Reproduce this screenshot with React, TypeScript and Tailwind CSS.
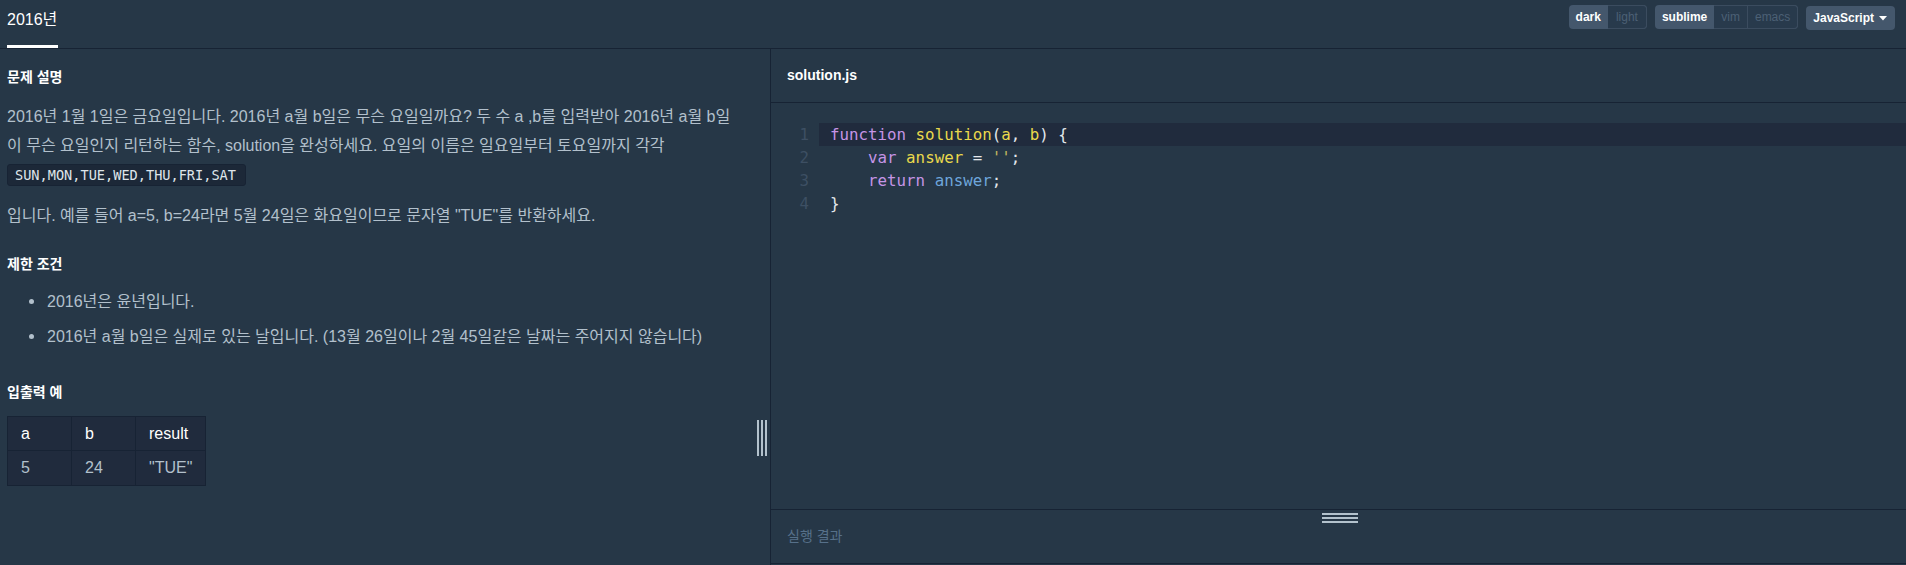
import React from "react";

const ui = { fontFamily: '"Liberation Sans", "Noto Sans CJK KR", sans-serif' };
const mono = { fontFamily: '"DejaVu Sans Mono", "Liberation Mono", monospace' };

function Seg({ items, pads, active }: { items: string[]; pads: string[]; active: number }) {
  return (
    <div className="flex h-[24px] rounded-[4px] overflow-hidden bg-[#44576c]">
      {items.map((t, i) => (
        <div
          key={t}
          className={
            i === active
              ? "flex items-center text-[12px] font-bold text-white " + pads[i]
              : "flex items-center text-[12px] text-[#4c6075] bg-[#283a4c] border-y border-r border-[#3b4c5f] " +
                pads[i] +
                (i === items.length - 1 ? " rounded-r-[4px]" : "")
          }
        >
          {t}
        </div>
      ))}
    </div>
  );
}

const tok = {
  kw: "text-[#c594e6]",
  fn: "text-[#ead94c]",
  pl: "text-[#e3e8ec]",
  bl: "text-[#6ea6dc]",
  st: "text-[#c2b960]",
};

export default function App() {
  return (
    <div className="w-[1906px] h-[565px] bg-[#263747] flex flex-col overflow-hidden" style={ui}>
      {/* header */}
      <div className="h-[49px] border-b border-[#172334] flex justify-between shrink-0">
        <div className="ml-[7px] flex flex-col justify-between">
          <div className="pt-[9px] text-[16px] leading-[22px] text-white">2016년</div>
          <div className="h-[3px] w-[51px] bg-white" />
        </div>
        <div className="flex items-start gap-[8px] pr-[11px] pt-[5px]">
          <Seg items={["dark", "light"]} pads={["px-[7px]", "px-[8px]"]} active={0} />
          <Seg items={["sublime", "vim", "emacs"]} pads={["px-[7px]", "px-[7px]", "px-[7px]"]} active={0} />
          <div className="mt-[1px] h-[24px] rounded-[4px] bg-[#44576c] flex items-center pl-[7px] pr-[8px] gap-[5px] text-[12px] font-bold text-white">
            JavaScript
            <svg width="8" height="5" viewBox="0 0 8 5"><path d="M0 0h8L4 4.5z" fill="#fff" /></svg>
          </div>
        </div>
      </div>

      {/* main */}
      <div className="flex flex-1 relative">
        {/* left */}
        <div className="w-[771px] border-r border-[#172334] pl-[7px] shrink-0 text-[#b2c0cc]">
          <div className="mt-[18px] text-[14px] leading-[20px] font-bold text-white">문제 설명</div>
          <div className="mt-[15px] text-[16px] leading-[29px] whitespace-nowrap">
            <div>2016년 1월 1일은 금요일입니다. 2016년 a월 b일은 무슨 요일일까요? 두 수 a ,b를 입력받아 2016년 a월 b일</div>
            <div>이 무슨 요일인지 리턴하는 함수, solution을 완성하세요. 요일의 이름은 일요일부터 토요일까지 각각</div>
          </div>
          <div className="mt-[4px] w-[239px] h-[22px] rounded-[3px] bg-[#1c2838] border border-[#172334] overflow-hidden flex items-center pl-[7px]">
            <span className="text-[13.6px] text-[#dfe5ea] whitespace-nowrap" style={mono}>
              SUN,MON,TUE,WED,THU,FRI,SAT
            </span>
          </div>
          <div className="mt-[15px] text-[16px] leading-[29px] whitespace-nowrap">
            입니다. 예를 들어 a=5, b=24라면 5월 24일은 화요일이므로 문자열 "TUE"를 반환하세요.
          </div>

          <div className="mt-[24px] text-[14px] leading-[20px] font-bold text-white">제한 조건</div>
          <ul className="mt-[10px] text-[16px] leading-[35px] whitespace-nowrap">
            <li className="flex items-center">
              <span className="w-[40px] pl-[22px] flex items-center"><span className="w-[5px] h-[5px] rounded-full bg-[#b2c0cc]" /></span>
              2016년은 윤년입니다.
            </li>
            <li className="flex items-center">
              <span className="w-[40px] pl-[22px] flex items-center"><span className="w-[5px] h-[5px] rounded-full bg-[#b2c0cc]" /></span>
              2016년 a월 b일은 실제로 있는 날입니다. (13월 26일이나 2월 45일같은 날짜는 주어지지 않습니다)
            </li>
          </ul>

          <div className="mt-[28px] text-[14px] leading-[20px] font-bold text-white">입출력 예</div>
          <table className="mt-[14px] border-collapse bg-[#202b3d] text-[16px]">
            <thead>
              <tr className="h-[34px] text-white">
                <td className="w-[64px] border border-[#172334] pl-[13px]">a</td>
                <td className="w-[64px] border border-[#172334] pl-[13px]">b</td>
                <td className="w-[70px] border border-[#172334] pl-[13px]">result</td>
              </tr>
            </thead>
            <tbody>
              <tr className="h-[35px] text-[#b2c0cc]">
                <td className="border border-[#172334] pl-[13px]">5</td>
                <td className="border border-[#172334] pl-[13px]">24</td>
                <td className="border border-[#172334] pl-[13px]">"TUE"</td>
              </tr>
            </tbody>
          </table>
        </div>

        {/* vertical resizer */}
        <div className="absolute left-[757px] top-[371px] flex gap-[2px]">
          <div className="w-[2px] h-[36px] bg-[#b3c2cd]" />
          <div className="w-[2px] h-[36px] bg-[#b3c2cd]" />
          <div className="w-[2px] h-[36px] bg-[#b3c2cd]" />
        </div>

        {/* right */}
        <div className="flex-1 flex flex-col">
          <div className="h-[54px] border-b border-[#172334] flex items-center pl-[16px] pb-[1px] text-[14px] font-bold text-white shrink-0">
            solution.js
          </div>
          <div className="flex-1 pt-[20px] text-[15.8px] leading-[23px]" style={mono}>
            {[
              <><span className={tok.kw}>function</span> <span className={tok.fn}>solution</span><span className={tok.pl}>(</span><span className={tok.fn}>a</span><span className={tok.pl}>, </span><span className={tok.fn}>b</span><span className={tok.pl}>) {"{"}</span></>,
              <>{"    "}<span className={tok.kw}>var</span> <span className={tok.fn}>answer</span> <span className={tok.pl}>=</span> <span className={tok.st}>''</span><span className={tok.pl}>;</span></>,
              <>{"    "}<span className={tok.kw}>return</span> <span className={tok.bl}>answer</span><span className={tok.pl}>;</span></>,
              <><span className={tok.pl}>{"}"}</span></>,
            ].map((c, i) => (
              <div key={i} className="flex h-[23px]">
                <div className="w-[38px] text-right text-[#3d4f63] shrink-0">{i + 1}</div>
                <div className={"ml-[10px] flex-1 pl-[11px] whitespace-pre " + (i === 0 ? "bg-[#202b3d]" : "")}>{c}</div>
              </div>
            ))}
          </div>
          <div className="h-[55px] border-t border-b border-[#172334] relative shrink-0 mb-[1px] flex items-center pl-[16px]">
            <div className="absolute left-[551px] top-[3px] flex flex-col gap-[2px]">
              <div className="w-[36px] h-[2px] bg-[#b3c2cd]" />
              <div className="w-[36px] h-[2px] bg-[#b3c2cd]" />
              <div className="w-[36px] h-[2px] bg-[#b3c2cd]" />
            </div>
            <div className="text-[14px] text-[#56708a]">실행 결과</div>
          </div>
        </div>
      </div>
    </div>
  );
}
